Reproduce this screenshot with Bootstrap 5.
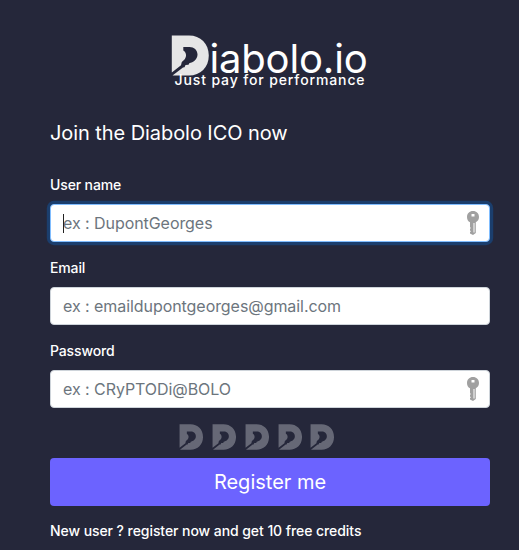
<!DOCTYPE html>
<html lang="en">
<head>
<meta charset="utf-8">
<meta name="viewport" content="width=device-width, initial-scale=1">
<title>Diabolo.io</title>
<link rel="stylesheet" href="https://cdn.jsdelivr.net/npm/bootstrap@5.3.0/dist/css/bootstrap.min.css">
<style>
body{background:#25273a;color:#fff;font-family:Inter,"Liberation Sans",sans-serif;height:550px;overflow:hidden}
.signup{width:440px;margin-left:50px;padding-top:35px}
.brand{height:54px;padding-right:1px}
.brand-logo{width:38px;height:41px;fill:#e6e6e6}
.brand-name{font-size:40px;line-height:48px;letter-spacing:-.15px;white-space:nowrap}
.tagline{font-size:14px;line-height:16px;letter-spacing:.87px;font-weight:500;margin-top:-11px;padding-left:1px;white-space:nowrap}
.title{font-size:20px;line-height:24px;letter-spacing:-.07px;margin:32px 0 0;font-weight:400}
.field-label{font-size:14px;line-height:21px;letter-spacing:-.13px;font-weight:500;margin:0 0 9px;display:block}
.field{margin-bottom:15px}
.field-first{margin-top:29px}
.field .form-control{height:38px;border-radius:4px;border-color:#ced4da;font-size:16px;letter-spacing:-.06px;background:#fff}
.field .form-control::placeholder{color:#6c757d}
.field .form-control.active{border-color:#80bdff;box-shadow:0 0 0 3.2px #1b3e6d}
.key{right:10px;top:6px;width:14px;height:26px}
.caret{left:13px;top:10px;width:1px;height:19px;background:#222}
.rating{margin:0 0 8px;padding-top:1px;height:27px;gap:8.6px;padding-right:26px}
.rating svg{width:24.2px;height:26px;fill:#666876}
.btn-register{background:#6c63ff;color:#fff;font-size:20px;line-height:30px;height:48px;border-radius:4px}
.note{font-size:14px;line-height:21px;letter-spacing:-.07px;font-weight:500;margin:14px 0 0}
</style>
<script src="https://cdn.jsdelivr.net/npm/bootstrap@5.3.0/dist/js/bootstrap.bundle.min.js"></script>
</head>
<body>
<svg class="d-none">
<symbol id="d-mark" viewBox="0 0 38 41"><path d="M.8 .5H18C29.500 .5 37.800 8.500 37.800 20.500S29.500 40.500 18 40.500H1.500L12 32.500 13.500 32.300 14.500 30 17.500 29.800 18.500 28C22 27.500 26.500 24.500 26.500 19.500 26.500 15 23 12 18.500 12H12.300V15.500C15.500 17.500 16 21.500 13.500 24.500L10.800 27 10 30.300 .8 37.500Z"/></symbol>
<symbol id="key-mark" viewBox="0 0 14 26"><path fill="#a0a0a0" fill-rule="evenodd" d="M7 1C10.500 1 13 3.500 13 7c0 2.500-1.200 4.300-3.200 5.200V23L7 25 4 23.500V22l1-.8-1-.7v-1.700l1-.8-1-.7V12.300C2 11.400 1 9.500 1 7 1 3.500 3.500 1 7 1ZM5.500 4v2.500h3V4ZM7.500 13v9.500h1V13Z"/></symbol>
</svg>
<main class="signup">
<header class="brand d-flex flex-column align-items-center">
<div class="d-flex"><svg class="brand-logo"><use href="#d-mark"/></svg><span class="brand-name">iabolo.io</span></div>
<div class="tagline">Just pay for performance</div>
</header>
<h1 class="title">Join the Diabolo ICO now</h1>
<form>
<div class="field field-first">
<label class="field-label" for="user">User name</label>
<div class="position-relative"><input class="form-control active" id="user" type="text" placeholder="ex : DupontGeorges"><span class="caret position-absolute"></span><svg class="key position-absolute"><use href="#key-mark"/></svg></div>
</div>
<div class="field">
<label class="field-label" for="email">Email</label>
<input class="form-control" id="email" type="email" placeholder="ex : emaildupontgeorges@gmail.com">
</div>
<div class="field">
<label class="field-label" for="pass">Password</label>
<div class="position-relative"><input class="form-control" id="pass" type="password" placeholder="ex : CRyPTODi@BOLO"><svg class="key position-absolute"><use href="#key-mark"/></svg></div>
</div>
<div class="rating d-flex justify-content-center"><svg><use href="#d-mark"/></svg><svg><use href="#d-mark"/></svg><svg><use href="#d-mark"/></svg><svg><use href="#d-mark"/></svg><svg><use href="#d-mark"/></svg></div>
<button class="btn btn-register w-100" type="button">Register me</button>
<p class="note">New user ? register now and get 10 free credits</p>
</form>
</main>
</body>
</html>
